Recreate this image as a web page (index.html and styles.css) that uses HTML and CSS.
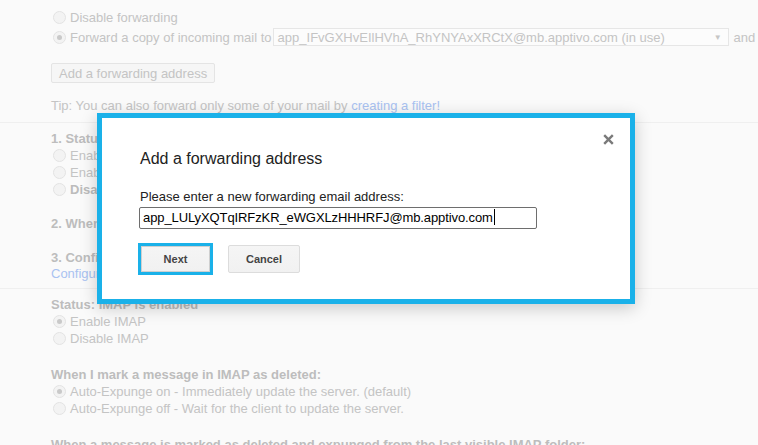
FILE: index.html
```html
<!DOCTYPE html>
<html lang="en">
<head>
    <meta charset="UTF-8">
    <meta name="viewport" content="width=device-width, initial-scale=1.0">
    <title>Settings - Forwarding and POP/IMAP</title>
    <link rel="stylesheet" href="styles.css">
</head>
<body>
    <div class="settings">
        <!-- Forwarding -->
        <div class="section forwarding">
            <div class="opt"><span class="radio"></span>Disable forwarding</div>
            <div class="opt fwd-row">
                <span class="radio on"></span>Forward a copy of incoming mail to
                <span class="select">app_IFvGXHvEIlHVhA_RhYNYAxXRCtX@mb.apptivo.com (in use)<span class="arrow">&#9660;</span></span>
                <span class="and">and</span>
                <span class="select stub"></span>
            </div>
            <button class="btn-add" type="button">Add a forwarding address</button>
            <p class="tip">Tip: You can also forward only some of your mail by <a href="#">creating a filter!</a></p>
        </div>

        <!-- POP -->
        <div class="section pop">
            <div class="head">1. Status: POP is disabled</div>
            <div class="opt"><span class="radio"></span>Enable POP for all mail</div>
            <div class="opt"><span class="radio"></span>Enable POP for mail that arrives from now on</div>
            <div class="opt"><span class="radio"></span><b>Disable POP</b></div>
            <div class="head">2. When messages are accessed with POP</div>
            <div class="head">3. Configure your email client (e.g. Outlook, Eudora, Netscape Mail)</div>
            <a class="link-line" href="#">Configuration instructions</a>
        </div>

        <!-- IMAP -->
        <div class="section imap">
            <div class="head">Status: IMAP is enabled</div>
            <div class="opt"><span class="radio on"></span>Enable IMAP</div>
            <div class="opt"><span class="radio"></span>Disable IMAP</div>
            <div class="head">When I mark a message in IMAP as deleted:</div>
            <div class="opt"><span class="radio on"></span>Auto-Expunge on - Immediately update the server. (default)</div>
            <div class="opt"><span class="radio"></span>Auto-Expunge off - Wait for the client to update the server.</div>
            <div class="head">When a message is marked as deleted and expunged from the last visible IMAP folder:</div>
        </div>
    </div>

    <div class="dialog" role="dialog">
        <button class="close" type="button" aria-label="Close">
            <svg width="11" height="11" viewBox="0 0 11 11"><path d="M1.2 1.2 9.8 9.8M9.8 1.2 1.2 9.8" stroke="#7a7a7a" stroke-width="2.4" fill="none"/></svg>
        </button>
        <h2 class="dialog-title">Add a forwarding address</h2>
        <p class="dialog-label">Please enter a new forwarding email address:</p>
        <div class="field">app_LULyXQTqIRFzKR_eWGXLzHHHRFJ@mb.apptivo.com<span class="caret"></span></div>
        <div class="dialog-buttons">
            <button class="btn btn-next" type="button">Next</button>
            <button class="btn" type="button">Cancel</button>
        </div>
    </div>
</body>
</html>
```

FILE: styles.css
```css
body {
    margin: 0;
    height: 445px;
    overflow: hidden;
    position: relative;
    background: #fafafa;
    font-family: "Liberation Sans", Arial, sans-serif;
    font-size: 13px;
    color: #c4c4c4;
}

a {
    color: #a9c2f1;
    text-decoration: none;
}

.section {
    padding: 8px 0 7px 51px;
    border-bottom: 1px solid #efefef;
    white-space: nowrap;
}

.opt {
    display: flex;
    align-items: center;
    height: 17px;
}

.forwarding .opt {
    height: 18px;
}

.fwd-row {
    margin-top: 2px;
}

.radio {
    flex: none;
    display: grid;
    place-items: center;
    box-sizing: border-box;
    width: 13px;
    height: 13px;
    margin: 0 4px 0 2px;
    border: 1px solid #e3e3e3;
    border-radius: 50%;
    background: #f3f3f3;
}

.radio.on::after {
    content: "";
    width: 5px;
    height: 5px;
    border-radius: 50%;
    background: #c9c9c9;
}

.opt b {
    color: #bcbcbc;
}

.select {
    flex: none;
    display: flex;
    justify-content: space-between;
    align-items: center;
    box-sizing: border-box;
    width: 456px;
    height: 18px;
    margin-left: 1px;
    padding: 0 6px 0 4px;
    border: 1px solid #e6e6e6;
    background: #fcfcfc;
}

.select .arrow {
    font-size: 8px;
    color: #c6c6c6;
}

.select.stub {
    width: 40px;
    margin-left: 3px;
}

.and {
    margin-left: 5px;
}

.btn-add {
    display: block;
    height: 20px;
    margin-top: 17px;
    padding: 0 7px;
    border: 1px solid #e4e4e4;
    border-radius: 2px;
    background: #f6f6f6;
    font: inherit;
    color: inherit;
}

.tip {
    margin: 14px 0 0;
    line-height: 18px;
}

.head {
    font-weight: bold;
    line-height: 16px;
    color: #bdbdbd;
}

.head + .head,
.opt + .head {
    margin-top: 18px;
}

.imap .opt + .head {
    margin-top: 20px;
}

.link-line {
    display: block;
    line-height: 15px;
}

/* modal */
.dialog {
    position: absolute;
    left: 97px;
    top: 113px;
    box-sizing: border-box;
    width: 538px;
    height: 191px;
    padding: 31px 38px 0;
    border: 5px solid #1ab1e9;
    background: #fff;
    box-shadow: 0 4px 16px rgba(0, 0, 0, 0.2);
    color: #222;
}

.close {
    position: absolute;
    top: 16px;
    right: 16px;
    padding: 0;
    border: none;
    background: none;
    line-height: 0;
}

.dialog-title {
    margin: 0;
    font-size: 16px;
    font-weight: normal;
    line-height: 20px;
}

.dialog-label {
    margin: 20px 0 0;
    line-height: 16px;
}

.field {
    box-sizing: border-box;
    width: 398px;
    height: 22px;
    margin: 2px 0 0 -1px;
    padding: 0 3px;
    border: 1px solid #6e6e6e;
    border-radius: 2px;
    line-height: 20px;
    letter-spacing: -0.1px;
    color: #000;
    white-space: nowrap;
}

.caret {
    display: inline-block;
    width: 1px;
    height: 16px;
    margin-left: 1px;
    background: #000;
    vertical-align: -3px;
}

.dialog-buttons {
    display: flex;
    align-items: center;
    gap: 18px;
    margin-top: 16px;
}

.btn {
    box-sizing: border-box;
    width: 72px;
    height: 28px;
    padding: 0;
    border: 1px solid #dcdcdc;
    border-radius: 2px;
    background: linear-gradient(#f5f5f5, #f1f1f1);
    font-family: "Liberation Sans", Arial, sans-serif;
    font-size: 11px;
    font-weight: bold;
    color: #444;
}

.btn-next {
    width: 69px;
    height: 26px;
    margin-left: 1px;
    border-color: #cfcfcf;
    border-radius: 0;
    outline: 3px solid #1ab1e9;
}
```
